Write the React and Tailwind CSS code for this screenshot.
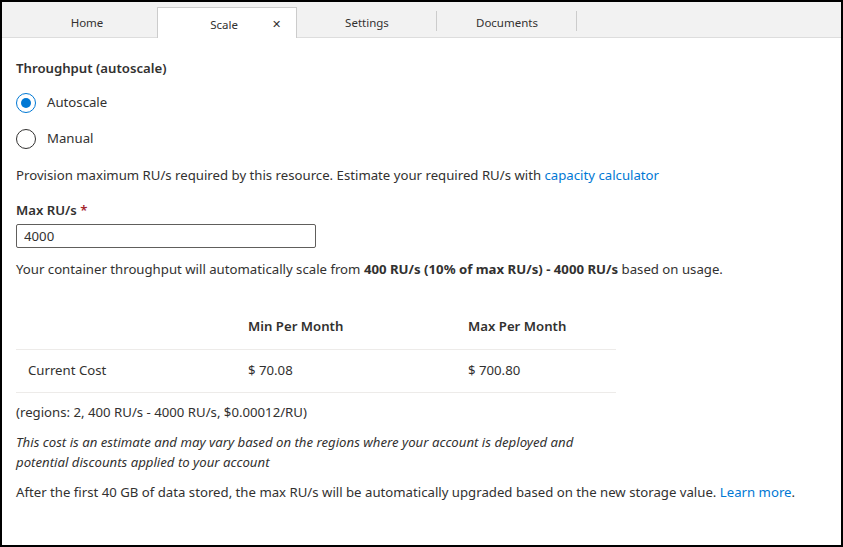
import React, { useState } from "react";

const tabs = ["Home", "Scale", "Settings", "Documents"];

const Radio = ({ checked, label, onClick }) => (
  <button type="button" onClick={onClick} className="flex items-center gap-[11px] h-[20px]">
    <span
      className={`w-[20px] h-[20px] rounded-full border flex items-center justify-center ${
        checked ? "border-[#0078d4]" : "border-[#323130]"
      }`}
    >
      {checked && <span className="w-[10px] h-[10px] rounded-full bg-[#0078d4]" />}
    </span>
    <span className="text-[13.2px] text-[#323130]">{label}</span>
  </button>
);

export default function App() {
  const [mode, setMode] = useState("autoscale");
  const [maxRu, setMaxRu] = useState("4000");

  return (
    <div
      className="w-[843px] h-[547px] border-2 border-black bg-white text-[#323130] overflow-hidden"
      style={{ fontFamily: '"Segoe UI", "Noto Sans", sans-serif' }}
    >
      <div className="h-[36px] bg-[#f2f2f2] border-b border-[#dddddd] flex items-end pl-[15px]">
        {tabs.map((t, i) =>
          t === "Scale" ? (
            <div
              key={t}
              className="w-[140px] h-[31px] -mb-px bg-white border border-b-0 border-[#cccccc] flex items-center justify-center relative text-[11.5px] text-[#323130]"
            >
              <span className="pt-[3px] -ml-[6px]">{t}</span>
              <span className="absolute right-[15px] top-[8px] text-[11px]">✕</span>
            </div>
          ) : (
            <div key={t} className="w-[140px] h-[31px] flex items-center justify-center relative text-[11.5px]">
              <span className="pt-[3px]">{t}</span>
              {i > 1 && <span className="absolute right-0 top-[5px] h-[20px] w-px bg-[#cccccc]" />}
            </div>
          )
        )}
      </div>

      <div className="pl-[14px] text-[13.2px]">
        <div className="pt-[20px] font-semibold leading-[20px]">Throughput (autoscale)</div>
        <div className="mt-[15px] flex flex-col gap-[16px]">
          <Radio checked={mode === "autoscale"} label="Autoscale" onClick={() => setMode("autoscale")} />
          <Radio checked={mode === "manual"} label="Manual" onClick={() => setMode("manual")} />
        </div>
        <p className="mt-[16px] leading-[20px]">
          Provision maximum RU/s required by this resource. Estimate your required RU/s with{" "}
          <a className="text-[#0078d4]">capacity calculator</a>
        </p>
        <div className="mt-[15px] font-semibold leading-[20px]">
          Max RU/s <span className="text-[#a4262c]">*</span>
        </div>
        <input
          value={maxRu}
          onChange={(e) => setMaxRu(e.target.value)}
          className="mt-[4px] w-[300px] h-[24px] border border-[#605e5c] rounded-[2px] px-[7px] text-[13.2px] outline-none"
        />
        <p className="mt-[11px] leading-[20px]">
          Your container throughput will automatically scale from{" "}
          <b className="font-bold">400 RU/s (10% of max RU/s) - 4000 RU/s</b> based on usage.
        </p>

        <table className="mt-[26px] w-[600px] border-collapse text-left">
          <thead>
            <tr className="border-b border-[#edebe9]">
              <th className="w-[220px] h-[44px]"></th>
              <th className="w-[220px] pl-[12px] font-semibold">Min Per Month</th>
              <th className="pl-[12px] font-semibold">Max Per Month</th>
            </tr>
          </thead>
          <tbody>
            <tr className="border-b border-[#edebe9]">
              <td className="h-[43px] pl-[12px]">Current Cost</td>
              <td className="pl-[12px]">$ 70.08</td>
              <td className="pl-[12px]">$ 700.80</td>
            </tr>
          </tbody>
        </table>

        <p className="mt-[9px] leading-[20px]">(regions: 2, 400 RU/s - 4000 RU/s, $0.00012/RU)</p>
        <p className="mt-[10px] italic leading-[20px] w-[600px]">
          This cost is an estimate and may vary based on the regions where your account is deployed and potential
          discounts applied to your account
        </p>
        <p className="mt-[10px] leading-[20px]">
          After the first 40 GB of data stored, the max RU/s will be automatically upgraded based on the new storage
          value. <a className="text-[#0078d4]">Learn more</a>.
        </p>
      </div>
    </div>
  );
}
